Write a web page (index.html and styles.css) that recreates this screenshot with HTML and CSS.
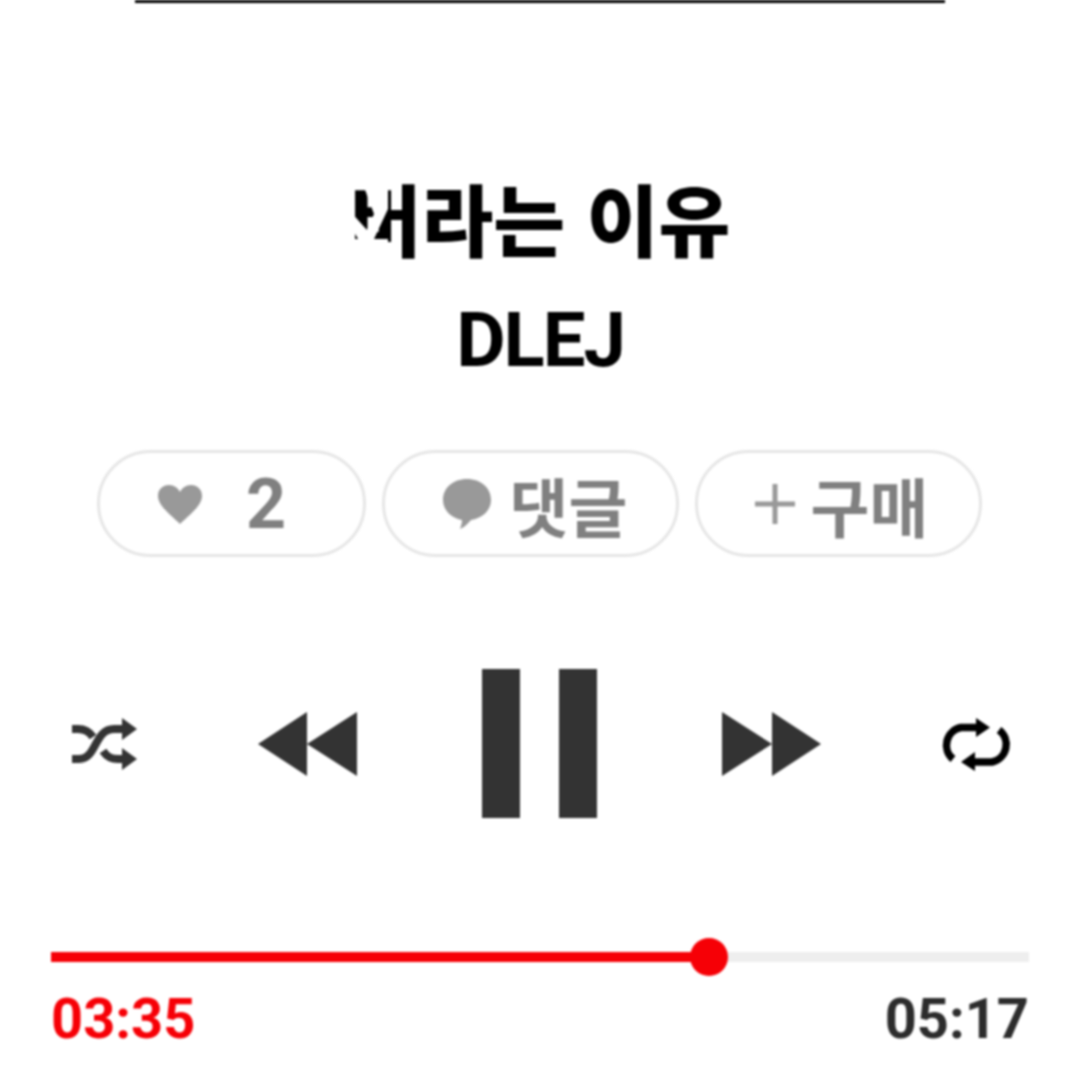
FILE: index.html
```html
<!DOCTYPE html>
<html lang="ko">
<head>
    <meta charset="UTF-8">
    <meta name="viewport" content="width=device-width, initial-scale=1.0">
    <title>Player</title>
    <link rel="stylesheet" href="styles.css">
</head>
<body>
    <div class="player">
        <div class="cover-edge"></div>

        <div class="song-info">
            <h1 class="song-title">
                <span class="title-first">버<svg class="title-mask" viewBox="0 0 40 60"><path d="M0 23 L18 43 L25 27 L15 0 L39 0 L39 22 L25 52 L39 52 L39 60 L0 60 L0 52 L9 52 L0 36 Z" fill="#fff"/></svg></span>라는 이유
            </h1>
            <p class="song-artist">DLEJ</p>
        </div>

        <div class="actions">
            <button class="action-btn like-btn">
                <svg class="heart-icon" viewBox="0 0 46 40"><path d="M23 40 C15 32 1 22 1 12 C1 5 6 1 12 1 C17 1 21 4 23 8 C25 4 29 1 34 1 C40 1 45 5 45 12 C45 22 31 32 23 40 Z"/></svg>
                <span class="like-count">2</span>
            </button>
            <button class="action-btn comment-btn">
                <svg class="bubble-icon" viewBox="0 0 48 50"><path d="M24 0 C38 0 48 9 48 21 C48 31 40 39 28 41 C25 44 22 48 17 50 C18 47 19 44 19 41 C8 39 0 31 0 21 C0 9 10 0 24 0 Z"/></svg>
                <span>댓글</span>
            </button>
            <button class="action-btn buy-btn">
                <svg class="plus-icon" viewBox="0 0 40 40"><path d="M17.5 0 H22.5 V17.5 H40 V22.5 H22.5 V40 H17.5 V22.5 H0 V17.5 H17.5 Z"/></svg>
                <span>구매</span>
            </button>
        </div>

        <div class="controls">
            <svg class="shuffle-icon" viewBox="0 0 67 52">
                <path d="M2 11 H8 C14 11 19 13 23 19 M2 41 H9 C27 41 24 11 44 11 H54 M33 33 C37 39 41 41 48 41 H54" fill="none" stroke="#333" stroke-width="8"/>
                <path d="M52 0 L67 11 L52 22 Z M52 30 L67 41 L52 52 Z" fill="#333"/>
            </svg>
            <svg class="skip-icon rew-icon" viewBox="0 0 99 64"><path d="M0 32 L49 0 V64 Z M49 32 L99 0 V64 Z"/></svg>
            <div class="pause">
                <span class="pause-bar"></span>
                <span class="pause-bar"></span>
            </div>
            <svg class="skip-icon ff-icon" viewBox="0 0 99 64"><path d="M99 32 L50 0 V64 Z M50 32 L0 0 V64 Z"/></svg>
            <svg class="repeat-icon" viewBox="0 0 67 52">
                <path d="M10 41 A18 18 0 0 1 18 9.5 H36 M56 12 A18 18 0 0 1 49 44 H32" fill="none" stroke="#000" stroke-width="7.5"/>
                <path d="M33 0 L47 9.5 L33 19 Z M32 34 L18 44 L32 53 Z" fill="#000"/>
            </svg>
        </div>

        <div class="progress">
            <div class="track">
                <div class="track-done" style="width: 67.4%"></div>
                <div class="knob"></div>
            </div>
            <div class="times">
                <span class="time-now">03:35</span>
                <span class="time-total">05:17</span>
            </div>
        </div>
    </div>
</body>
</html>
```

FILE: styles.css
```css
* {
    margin: 0;
    padding: 0;
    box-sizing: border-box;
}
body {
    background: #fff;
    font-family: 'Roboto', 'Noto Sans CJK KR', sans-serif;
}
.player {
    width: 1080px;
    height: 1080px;
    display: flex;
    flex-direction: column;
    align-items: center;
    overflow: hidden;
    filter: blur(0.8px);
}
.cover-edge {
    width: 810px;
    height: 3px;
    background: #000;
}
.song-info {
    margin-top: 169px;
    text-align: center;
}
.song-title {
    font-family: 'Noto Sans CJK KR', sans-serif;
    font-size: 78px;
    font-weight: 900;
    line-height: 90px;
    color: #000;
}
.title-first {
    position: relative;
}
.title-mask {
    position: absolute;
    left: -1px;
    top: 26px;
    width: 40px;
    height: 60px;
}
.song-artist {
    margin-top: 36px;
    font-size: 76px;
    font-weight: 700;
    letter-spacing: -2px;
    line-height: 84px;
    color: #000;
}
.actions {
    margin-top: 68px;
    display: flex;
    gap: 16px;
    margin-left: -1px;
}
.action-btn {
    height: 107px;
    border: 3px solid #e6e6e6;
    border-radius: 54px;
    background: #fff;
    color: #808080;
    font-family: 'Noto Sans CJK KR', sans-serif;
    font-size: 64px;
    font-weight: 700;
    display: flex;
    align-items: center;
    justify-content: center;
}
.action-btn svg {
    fill: #999;
}
.like-btn {
    width: 269px;
    gap: 43px;
    padding-right: 20px;
}
.comment-btn {
    width: 297px;
    gap: 19px;
    padding-left: 9px;
}
.buy-btn {
    width: 287px;
    gap: 16px;
    padding-left: 6px;
}
.like-count {
    font-family: 'Roboto', sans-serif;
    font-size: 70px;
}
.heart-icon {
    width: 46px;
    height: 40px;
}
.bubble-icon {
    width: 48px;
    height: 50px;
}
.plus-icon {
    width: 40px;
    height: 40px;
}
.controls {
    width: 940px;
    margin-top: 112px;
    display: flex;
    justify-content: space-between;
    align-items: center;
}
.shuffle-icon,
.repeat-icon {
    width: 67px;
    height: 52px;
    overflow: visible;
}
.skip-icon {
    width: 99px;
    height: 64px;
    fill: #333;
}
.rew-icon {
    margin: 0 2px 0 -2px;
}
.ff-icon {
    margin: 0 -1px 0 1px;
}
.pause {
    width: 115px;
    height: 149px;
    margin: 0 1px 0 -1px;
    display: flex;
    justify-content: space-between;
}
.pause-bar {
    width: 38px;
    background: #333;
}
.progress {
    width: 978px;
    margin-top: 134px;
}
.track {
    position: relative;
    height: 10px;
    background: #eee;
}
.track-done {
    height: 100%;
    background: #f60006;
}
.knob {
    position: absolute;
    left: 639px;
    top: -14px;
    width: 38px;
    height: 38px;
    border-radius: 50%;
    background: #f60006;
}
.times {
    margin-top: 24px;
    display: flex;
    justify-content: space-between;
    font-size: 56px;
    font-weight: 700;
    line-height: 66px;
}
.time-now {
    color: #f60006;
}
.time-total {
    color: #2c2c2c;
}
```
